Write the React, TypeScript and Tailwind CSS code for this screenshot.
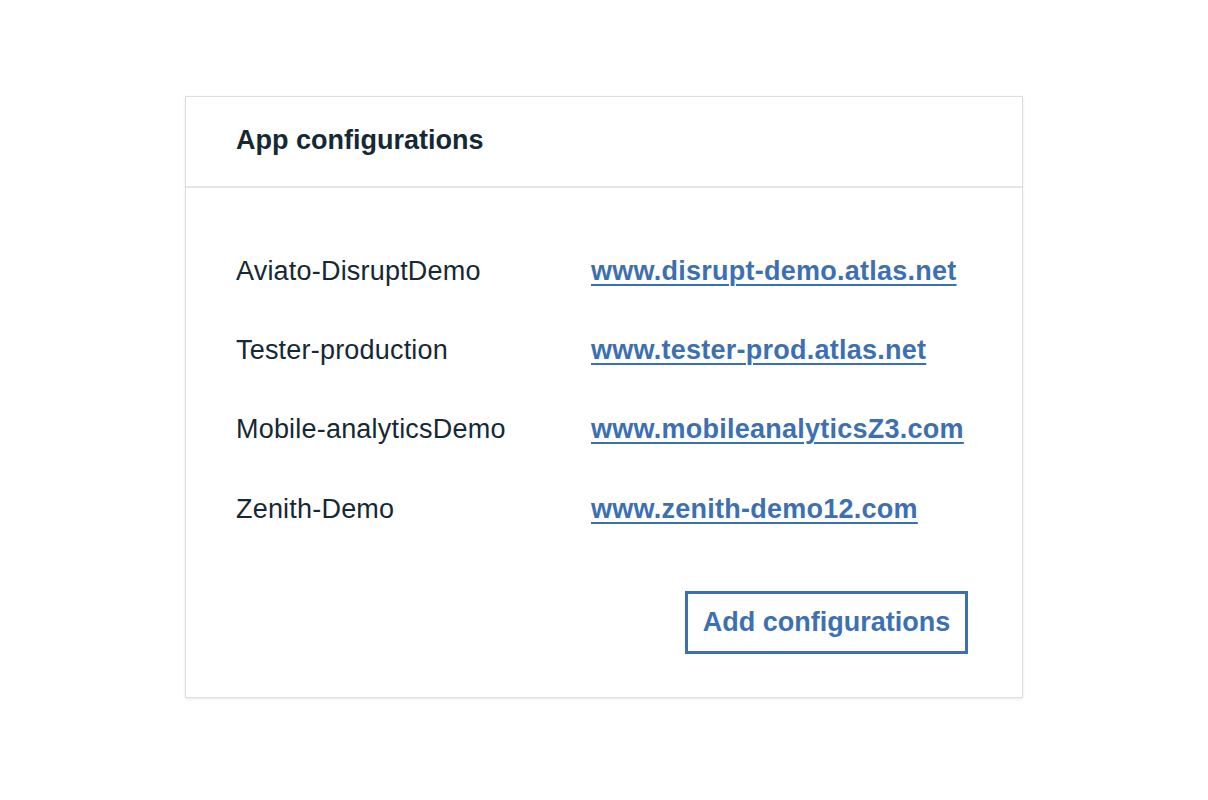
const configs = [
  { name: "Aviato-DisruptDemo", url: "www.disrupt-demo.atlas.net" },
  { name: "Tester-production", url: "www.tester-prod.atlas.net" },
  { name: "Mobile-analyticsDemo", url: "www.mobileanalyticsZ3.com" },
  { name: "Zenith-Demo", url: "www.zenith-demo12.com" },
];

const App = () => {
  return (
    <div
      className="min-h-[800px] w-full bg-white pt-[96px]"
      style={{ fontFamily: '"Liberation Sans", Arial, sans-serif' }}
    >
      <section className="mx-auto w-[838px] border border-[#dcdfe2] bg-white shadow-[0_1px_3px_rgba(0,0,0,0.1)]">
        <header className="flex h-[91px] items-center border-b-2 border-[#e4e7ea] px-[50px] pb-[4px]">
          <h2 className="text-[27px] font-bold leading-8 text-[#152935]">App configurations</h2>
        </header>

        <div className="px-[50px] pt-[67px] pb-[43px]">
          <div className="flex flex-col gap-[47px]">
            {configs.map((item, i) => (
              <div
                className={`flex h-8 items-center text-[27px] leading-8 ${i === 3 ? "mt-[1px]" : ""}`}
                key={item.name}
              >
                <span className="w-[355px] tracking-[0.2px] text-[#152935]">{item.name}</span>
                <a
                  href="#"
                  className="font-bold tracking-[0.25px] text-[#3d70b2] underline decoration-2 underline-offset-[4px]"
                >
                  {item.url}
                </a>
              </div>
            ))}
          </div>

          <div className="mt-[66px] flex justify-end pr-[4px]">
            <button className="flex h-[63px] w-[283px] items-center justify-center border-[3px] border-[#3d70b2] text-[27px] font-bold text-[#3d70b2]">
              Add configurations
            </button>
          </div>
        </div>
      </section>
    </div>
  );
};

export default App;
